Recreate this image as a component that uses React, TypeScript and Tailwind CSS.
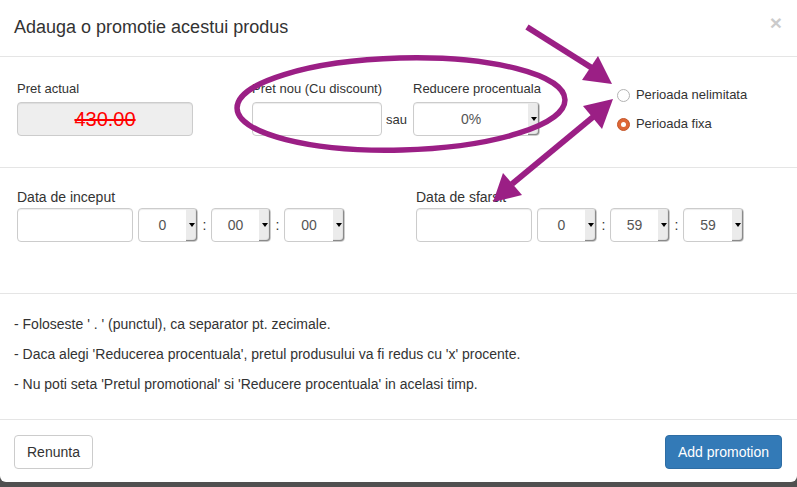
import React from "react";

function Sel({ w, value }: { w: string; value: string }) {
  return (
    <div className={`${w} h-[34px] border border-[#ccc] rounded-[4px] flex bg-white shadow-[inset_0_1px_1px_rgba(0,0,0,0.075)]`}>
      <div className="flex-1 flex items-center justify-center text-[14px] text-[#555]">{value}</div>
      <div className="w-[11px] bg-[#ebebeb] rounded-r-[3px] shadow-[inset_-1px_-1px_1px_#808080] flex items-center justify-center">
        <span className="w-0 h-0 border-l-[3px] border-r-[3px] border-t-[4px] border-l-transparent border-r-transparent border-t-black" />
      </div>
    </div>
  );
}

function Colon() {
  return <div className="w-[13px] flex items-center justify-center text-[14px] text-[#333]">:</div>;
}

export default function App() {
  return (
    <div className="relative w-[797px] h-[487px] overflow-hidden bg-[#505050] font-['Liberation_Sans',Arial,sans-serif] text-[#333]">
      <div className="bg-white h-[482px] rounded-b-[6px] flex flex-col">
        {/* header */}
        <div className="relative h-[57px] border-b border-[#e5e5e5] px-[14px] pt-[14px]">
          <h4 className="text-[18px] leading-[26px] text-[#333]">Adauga o promotie acestui produs</h4>
          <span className="absolute right-[15px] top-[10px] text-[21px] font-bold leading-[26px] text-black opacity-20">×</span>
        </div>

        {/* section 1 */}
        <div className="h-[111px] border-b border-[#e5e5e5] pl-[17px] pt-[23px] flex items-start">
          <div className="w-[176px] flex flex-col">
            <label className="text-[13px] leading-[18px] mb-[4px]">Pret actual</label>
            <div className="h-[34px] border border-[#ccc] rounded-[4px] bg-[#eee] flex items-center justify-center shadow-[inset_0_1px_1px_rgba(0,0,0,0.075)]">
              <span className="text-[20px] text-[#f00] line-through leading-none">430.00</span>
            </div>
          </div>
          <div className="ml-[59px] flex flex-col">
            <label className="text-[13px] leading-[18px] mb-[4px]">Pret nou (Cu discount)</label>
            <div className="flex items-center">
              <div className="w-[130px] h-[34px] border border-[#ccc] rounded-[4px] bg-white shadow-[inset_0_1px_1px_rgba(0,0,0,0.075)]" />
              <span className="w-[31px] pl-[4px] text-[13px] pt-[2px]">sau</span>
            </div>
          </div>
          <div className="flex flex-col">
            <label className="text-[13px] leading-[18px] mb-[4px]">Reducere procentuala</label>
            <Sel w="w-[127px]" value="0%" />
          </div>
          <div className="ml-[76px] mt-[6px] flex flex-col gap-[11px]">
            <div className="flex items-center h-[18px]">
              <span className="w-[13px] h-[13px] rounded-full border border-[#b3b3b3] bg-white" />
              <span className="ml-[6px] text-[13px] leading-[18px]">Perioada nelimitata</span>
            </div>
            <div className="flex items-center h-[18px]">
              <span className="w-[13px] h-[13px] rounded-full bg-[#dd6636] border border-[#c4562a] flex items-center justify-center">
                <span className="w-[5px] h-[5px] rounded-full bg-white" />
              </span>
              <span className="ml-[6px] text-[13px] leading-[18px]">Perioada fixa</span>
            </div>
          </div>
        </div>

        {/* section 2 */}
        <div className="h-[126px] border-b border-[#e5e5e5] pl-[17px] pt-[19px] flex items-start">
          <div className="flex flex-col">
            <label className="text-[14px] leading-[20px] mb-[1px]">Data de inceput</label>
            <div className="flex">
              <div className="w-[116px] h-[34px] border border-[#ccc] rounded-[4px] bg-white shadow-[inset_0_1px_1px_rgba(0,0,0,0.075)]" />
              <div className="ml-[5px] flex">
                <Sel w="w-[60px]" value="0" />
                <Colon />
                <Sel w="w-[60px]" value="00" />
                <Colon />
                <Sel w="w-[61px]" value="00" />
              </div>
            </div>
          </div>
          <div className="ml-[71px] flex flex-col">
            <label className="text-[14px] leading-[20px] mb-[1px]">Data de sfarsit</label>
            <div className="flex">
              <div className="w-[116px] h-[34px] border border-[#ccc] rounded-[4px] bg-white shadow-[inset_0_1px_1px_rgba(0,0,0,0.075)]" />
              <div className="ml-[5px] flex">
                <Sel w="w-[60px]" value="0" />
                <Colon />
                <Sel w="w-[60px]" value="59" />
                <Colon />
                <Sel w="w-[61px]" value="59" />
              </div>
            </div>
          </div>
        </div>

        {/* section 3 */}
        <div className="h-[126px] border-b border-[#e5e5e5] px-[14px] pt-[20px] text-[14px] leading-[20px]">
          <p className="mb-[10px]">- Foloseste ' . ' (punctul), ca separator pt. zecimale.</p>
          <p className="mb-[10px]">- Daca alegi 'Reducerea procentuala', pretul produsului va fi redus cu 'x' procente.</p>
          <p className="mb-[10px]">- Nu poti seta 'Pretul promotional' si 'Reducere procentuala' in acelasi timp.</p>
        </div>

        {/* footer */}
        <div className="flex-1 px-[14px] pr-[15px] pt-[15px] flex justify-between items-start">
          <button className="h-[34px] px-[12px] border border-[#ccc] rounded-[4px] bg-white text-[14px] text-[#333]">Renunta</button>
          <button className="h-[34px] px-[12px] border border-[#2e6da4] rounded-[4px] bg-[#337ab7] text-[14px] text-white">Add promotion</button>
        </div>
      </div>

      {/* annotations */}
      <svg className="absolute inset-0 pointer-events-none" width="797" height="487" viewBox="0 0 797 487">
        <ellipse cx="401" cy="104" rx="164" ry="46" fill="none" stroke="#9b1f85" strokeWidth="5.5" transform="rotate(-1.5 401 104)" />
        <line x1="527" y1="27" x2="592" y2="68" stroke="#9b1f85" strokeWidth="6" />
        <polygon points="612,84 582,80 598,56" fill="#9b1f85" />
        <line x1="512" y1="184" x2="593" y2="117" stroke="#9b1f85" strokeWidth="6" />
        <polygon points="613,99 583,106 602,129" fill="#9b1f85" />
        <polygon points="493,202 503,173 522,195" fill="#9b1f85" />
      </svg>
    </div>
  );
}
